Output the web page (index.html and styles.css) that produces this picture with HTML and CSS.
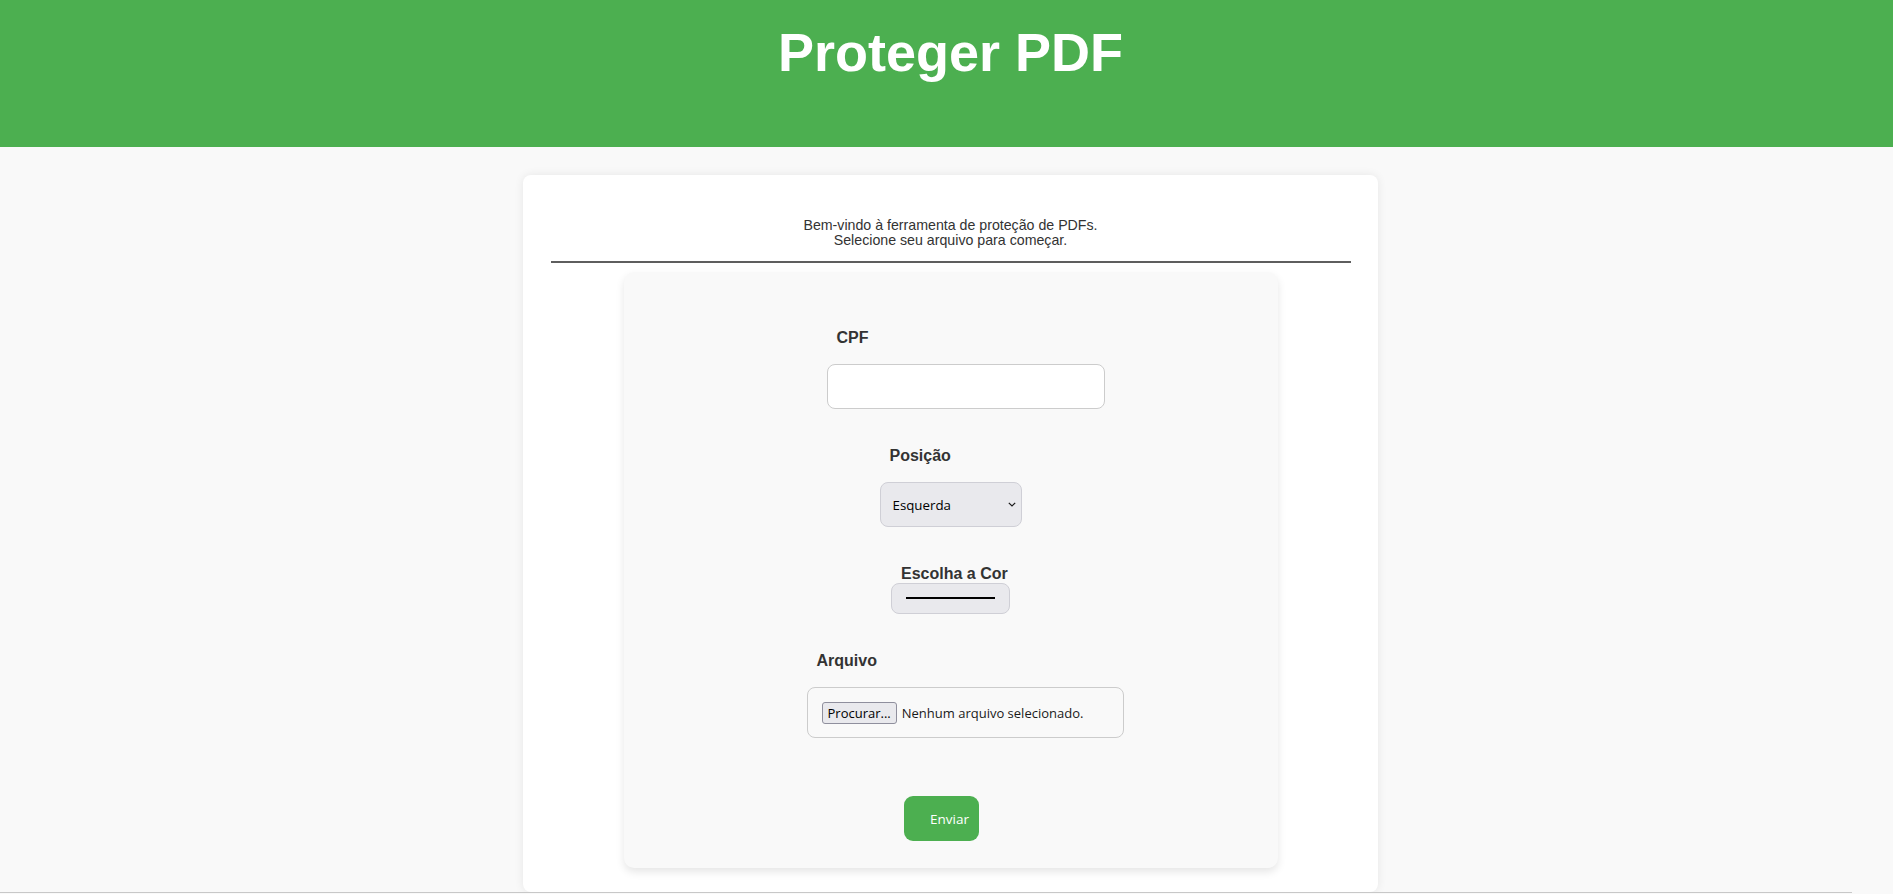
FILE: index.html
```html
<!DOCTYPE html>
<html lang="pt-BR">
<head>
<meta charset="utf-8">
<title>Proteger PDF</title>
<link rel="stylesheet" href="styles.css">
</head>
<body>
<header class="topbar">
  <h1 class="title">Proteger PDF</h1>
</header>
<main class="page">
  <section class="card">
    <p class="intro">Bem-vindo à ferramenta de proteção de PDFs.<br>Selecione seu arquivo para começar.</p>
    <hr class="divider">
    <form class="panel">
      <div class="field field-cpf">
        <label class="field-label" for="cpf">CPF</label>
        <input class="text-input" id="cpf" type="text">
      </div>
      <div class="field field-pos">
        <label class="field-label" for="posicao">Posição</label>
        <div class="select-wrap">
          <select class="select" id="posicao">
            <option>Esquerda</option>
            <option>Direita</option>
            <option>Centro</option>
          </select>
          <svg class="chevron" width="8" height="5" viewBox="0 0 8 5"><path d="M0.8 0.8 L4 4 L7.2 0.8" fill="none" stroke="#1a1a1a" stroke-width="1.2"/></svg>
        </div>
      </div>
      <div class="field field-color">
        <label class="field-label" for="cor">Escolha a Cor</label>
        <input class="color-input" id="cor" type="color" value="#000000">
      </div>
      <div class="field field-file">
        <label class="field-label" for="arquivo">Arquivo</label>
        <label class="file-box">
          <input class="file-native" id="arquivo" type="file">
          <span class="file-btn">Procurar...</span>
          <span class="file-name">Nenhum arquivo selecionado.</span>
        </label>
      </div>
      <div class="submit-row">
        <button class="submit" type="button">Enviar</button>
      </div>
    </form>
  </section>
</main>
<div class="scroll-thumb"></div>
</body>
</html>
```

FILE: styles.css
```css
html, body {
  margin: 0;
  padding: 0;
}

body {
  background: #f9f9f9;
  font-family: "Liberation Sans", Arial, sans-serif;
  color: #333;
}

.topbar {
  background: #4caf50;
  height: 147px;
  box-sizing: border-box;
  padding: 21px 0 0 8px;
}

.title {
  margin: 0;
  text-align: center;
  color: #fff;
  font-size: 54px;
  line-height: 62px;
  font-weight: bold;
}

.page {
  padding: 28px 0 0 8px;
}

.card {
  width: 800px;
  margin: 0 auto;
  background: #fff;
  border-radius: 8px;
  box-shadow: 0 0 10px rgba(0, 0, 0, 0.08);
  padding: 27px 27.5px 24px;
}

.intro {
  margin: 16px 0 0;
  text-align: center;
  font-size: 14.2px;
  line-height: 15px;
  color: #333;
}

.divider {
  border: 0;
  height: 2px;
  background: #5e5e5e;
  margin: 13px 0 9px;
}

.panel {
  width: 654px;
  margin: 0 auto;
  box-sizing: border-box;
  background: #f9f9f9;
  border-radius: 10px;
  box-shadow: 0 4px 8px rgba(0, 0, 0, 0.1);
  padding: 57px 0 27px;
}

.field {
  display: flex;
  flex-direction: column;
  align-items: flex-start;
  margin: 0 auto;
}

.field + .field {
  margin-top: 38px;
}

.field-cpf { width: 248px; }
.field-pos { width: 142px; }
.field-color { width: 119px; }
.field-file { width: 288px; }

.field-label {
  font-size: 16px;
  line-height: 18px;
  font-weight: bold;
  color: #333;
  margin: 0 0 17px 10px;
}

.field-color .field-label {
  margin-bottom: 0;
}

.text-input {
  width: 278px;
  height: 45px;
  flex-shrink: 0;
  box-sizing: border-box;
  border: 1px solid #ccc;
  border-radius: 8px;
  background: #fff;
  padding: 0 14px;
  font-family: "Open Sans", sans-serif;
  font-size: 13px;
  outline: none;
}

.select-wrap {
  position: relative;
  width: 142px;
  height: 45px;
}

.select {
  -webkit-appearance: none;
  appearance: none;
  width: 142px;
  height: 45px;
  box-sizing: border-box;
  border: 1px solid #cfcfd6;
  border-radius: 8px;
  background: #e9e9ed;
  padding: 0 0 0 12px;
  font-family: "Open Sans", sans-serif;
  font-size: 13.3px;
  color: #000;
  outline: none;
}

.chevron {
  position: absolute;
  right: 6px;
  top: 20px;
  pointer-events: none;
}

.color-input {
  -webkit-appearance: none;
  appearance: none;
  width: 119px;
  height: 31px;
  box-sizing: border-box;
  border: 1px solid #cfcfd6;
  border-radius: 8px;
  background: #e9e9ed;
  padding: 0;
  margin: 0;
  cursor: pointer;
}

.color-input::-webkit-color-swatch-wrapper {
  padding: 13px 14px 14px;
}

.color-input::-webkit-color-swatch {
  border: none;
  border-radius: 0;
}

.file-box {
  display: flex;
  align-items: center;
  width: 317px;
  height: 51px;
  flex-shrink: 0;
  box-sizing: border-box;
  border: 1px solid #ccc;
  border-radius: 8px;
  padding: 0 14px;
  font-family: "Open Sans", sans-serif;
  font-size: 13px;
  color: #1a1a1a;
}

.file-native {
  display: none;
}

.file-btn {
  display: inline-flex;
  align-items: center;
  height: 22px;
  box-sizing: border-box;
  padding: 0 5px;
  border: 1px solid #8f8f9d;
  border-radius: 3px;
  background: #e9e9ed;
  color: #000;
}

.file-name {
  margin-left: 5px;
}

.submit-row {
  display: flex;
  justify-content: center;
  padding-right: 18px;
  margin-top: 58px;
}

.submit {
  width: 75px;
  height: 45px;
  box-sizing: border-box;
  border: 0;
  border-radius: 9px;
  background: #4caf50;
  color: #fff;
  font-family: "Open Sans", sans-serif;
  font-size: 13.5px;
  text-align: left;
  padding: 0 0 0 26px;
  cursor: pointer;
}

.scroll-thumb {
  position: fixed;
  left: 0;
  bottom: 1px;
  width: 1852px;
  height: 1px;
  background: #c8c8c8;
}
```
